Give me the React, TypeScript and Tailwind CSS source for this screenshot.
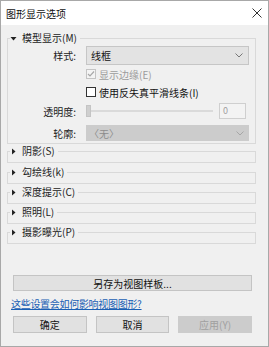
import React from 'react';

const font = { fontFamily: '"Noto Sans CJK SC", "Liberation Sans", sans-serif' };

function Tri({ open }: { open?: boolean }) {
  return open ? (
    <svg width="7" height="7" viewBox="0 0 7 7" className="mr-[5px]">
      <path d="M0.5 2 L6.5 2 L3.5 5.5 Z" fill="#222" />
    </svg>
  ) : (
    <svg width="7" height="7" viewBox="0 0 7 7" className="mr-[5px]">
      <path d="M2 0.5 L5.5 3.5 L2 6.5 Z" fill="#222" />
    </svg>
  );
}

function Chevron({ color }: { color: string }) {
  return (
    <svg width="8" height="5" viewBox="0 0 8 5">
      <path d="M0.5 0.5 L4 4 L7.5 0.5" fill="none" stroke={color} strokeWidth="1" />
    </svg>
  );
}

function Collapsed({ label, first }: { label: string; first?: boolean }) {
  return (
    <fieldset className={first ? 'border border-[#d9d9d9] mb-[2px]' : 'border border-[#d9d9d9] mb-[1px]'}>
      <legend className="ml-[2px] pr-[3px] h-[14px] flex items-center text-[10px] text-[#222] leading-none">
        <Tri />
        {label}
      </legend>
      <div className="h-[4px]" />
    </fieldset>
  );
}

export default function App() {
  return (
    <div style={font} className="w-[269px] h-[347px] border border-[#a8a8a8] bg-[#f0f0f0] flex flex-col overflow-hidden">
      <div className="h-[24px] bg-white flex items-center justify-between pl-[5px] pr-[6px] shrink-0">
        <span className="text-[10px] text-[#111]">图形显示选项</span>
        <svg width="10" height="10" viewBox="0 0 10 10">
          <path d="M0.5 0.5 L9.5 9.5 M9.5 0.5 L0.5 9.5" stroke="#333" strokeWidth="1" />
        </svg>
      </div>

      <div className="pl-[6px] pr-[12px] pt-[6px] flex flex-col">
        <fieldset className="border border-[#d9d9d9] pr-[6px] pb-[2px]">
          <legend className="ml-[2px] pr-[3px] h-[14px] flex items-center text-[10px] text-[#222] leading-none">
            <Tri open />
            模型显示(M)
          </legend>
          <div className="mt-[1px] flex items-center h-[19px]">
            <span className="w-[69px] text-right text-[10px] text-[#222] pr-[1px]">样式:</span>
            <div className="ml-[9px] flex-1 h-[19px] bg-[#e3e3e3] border border-[#c6c6c6] flex items-center justify-between pl-[4px] pr-[5px]">
              <span className="text-[10px] text-[#111]">线框</span>
              <Chevron color="#777" />
            </div>
          </div>
          <div className="flex items-center h-[18px] pl-[78px]">
            <div className="w-[10px] h-[10px] border border-[#c4c4c4] bg-[#f4f4f4] flex items-center justify-center">
              <svg width="8" height="8" viewBox="0 0 8 8">
                <path d="M1 4 L3 6 L7 1.5" fill="none" stroke="#a8a8a8" strokeWidth="1.2" />
              </svg>
            </div>
            <span className="ml-[3px] text-[10px] text-[#9c9c9c]">显示边缘(E)</span>
          </div>
          <div className="flex items-center h-[18px] pl-[78px]">
            <div className="w-[10px] h-[10px] border border-[#333] bg-white" />
            <span className="ml-[3px] text-[10px] text-[#111]">使用反失真平滑线条(I)</span>
          </div>
          <div className="flex items-center h-[20px]">
            <span className="w-[69px] text-right text-[10px] text-[#222] pr-[1px]">透明度:</span>
            <div className="ml-[9px] flex-1 relative h-[14px] flex items-center">
              <div className="w-full h-[2px] bg-[#dadada] ml-[2px]" />
              <div className="absolute left-0 top-[1px] w-[5px] h-[12px] bg-[#cfcfcf] border border-[#c4c4c4]" />
            </div>
            <div className="ml-[6px] mr-[3px] w-[27px] h-[16px] border border-[#cfcfcf] bg-[#f3f3f3] flex items-center pl-[3px] text-[9px] text-[#a0a0a0]">
              0
            </div>
          </div>
          <div className="mt-[4px] flex items-center h-[16px]">
            <span className="w-[69px] text-right text-[10px] text-[#222] pr-[1px]">轮廓:</span>
            <div className="ml-[9px] flex-1 h-[16px] bg-[#cccccc] flex items-center justify-between pl-[3px] pr-[5px]">
              <span className="text-[10px] text-[#8c8c8c]">〈无〉</span>
              <Chevron color="#a6a6a6" />
            </div>
          </div>
        </fieldset>

        <Collapsed label="阴影(S)" first />
        <Collapsed label="勾绘线(k)" />
        <Collapsed label="深度提示(C)" />
        <Collapsed label="照明(L)" />
        <Collapsed label="摄影曝光(P)" />
      </div>

      <div className="mt-[30px] pl-[12px] pr-[16px]">
        <div className="h-[16px] bg-[#e1e1e1] border border-[#c4c4c4] flex items-center justify-center text-[10px] text-[#111]">
          另存为视图样板...
        </div>
      </div>
      <div className="mt-[4px] pl-[10px] h-[16px] flex items-center">
        <span className="text-[10px] text-[#1a5fb4] underline tracking-[-0.3px]">这些设置会如何影响视图图形?</span>
      </div>
      <div className="mt-[5px] pl-[12px] pr-[16px] grid grid-cols-3 gap-[9px]">
        <div className="h-[17px] bg-[#e1e1e1] border border-[#c4c4c4] flex items-center justify-center text-[10px] text-[#111]">确定</div>
        <div className="h-[17px] bg-[#e1e1e1] border border-[#c4c4c4] flex items-center justify-center text-[10px] text-[#111]">取消</div>
        <div className="h-[17px] bg-[#cccccc] border border-[#cccccc] flex items-center justify-center text-[10px] text-[#a0a0a0]">应用(Y)</div>
      </div>
    </div>
  );
}
